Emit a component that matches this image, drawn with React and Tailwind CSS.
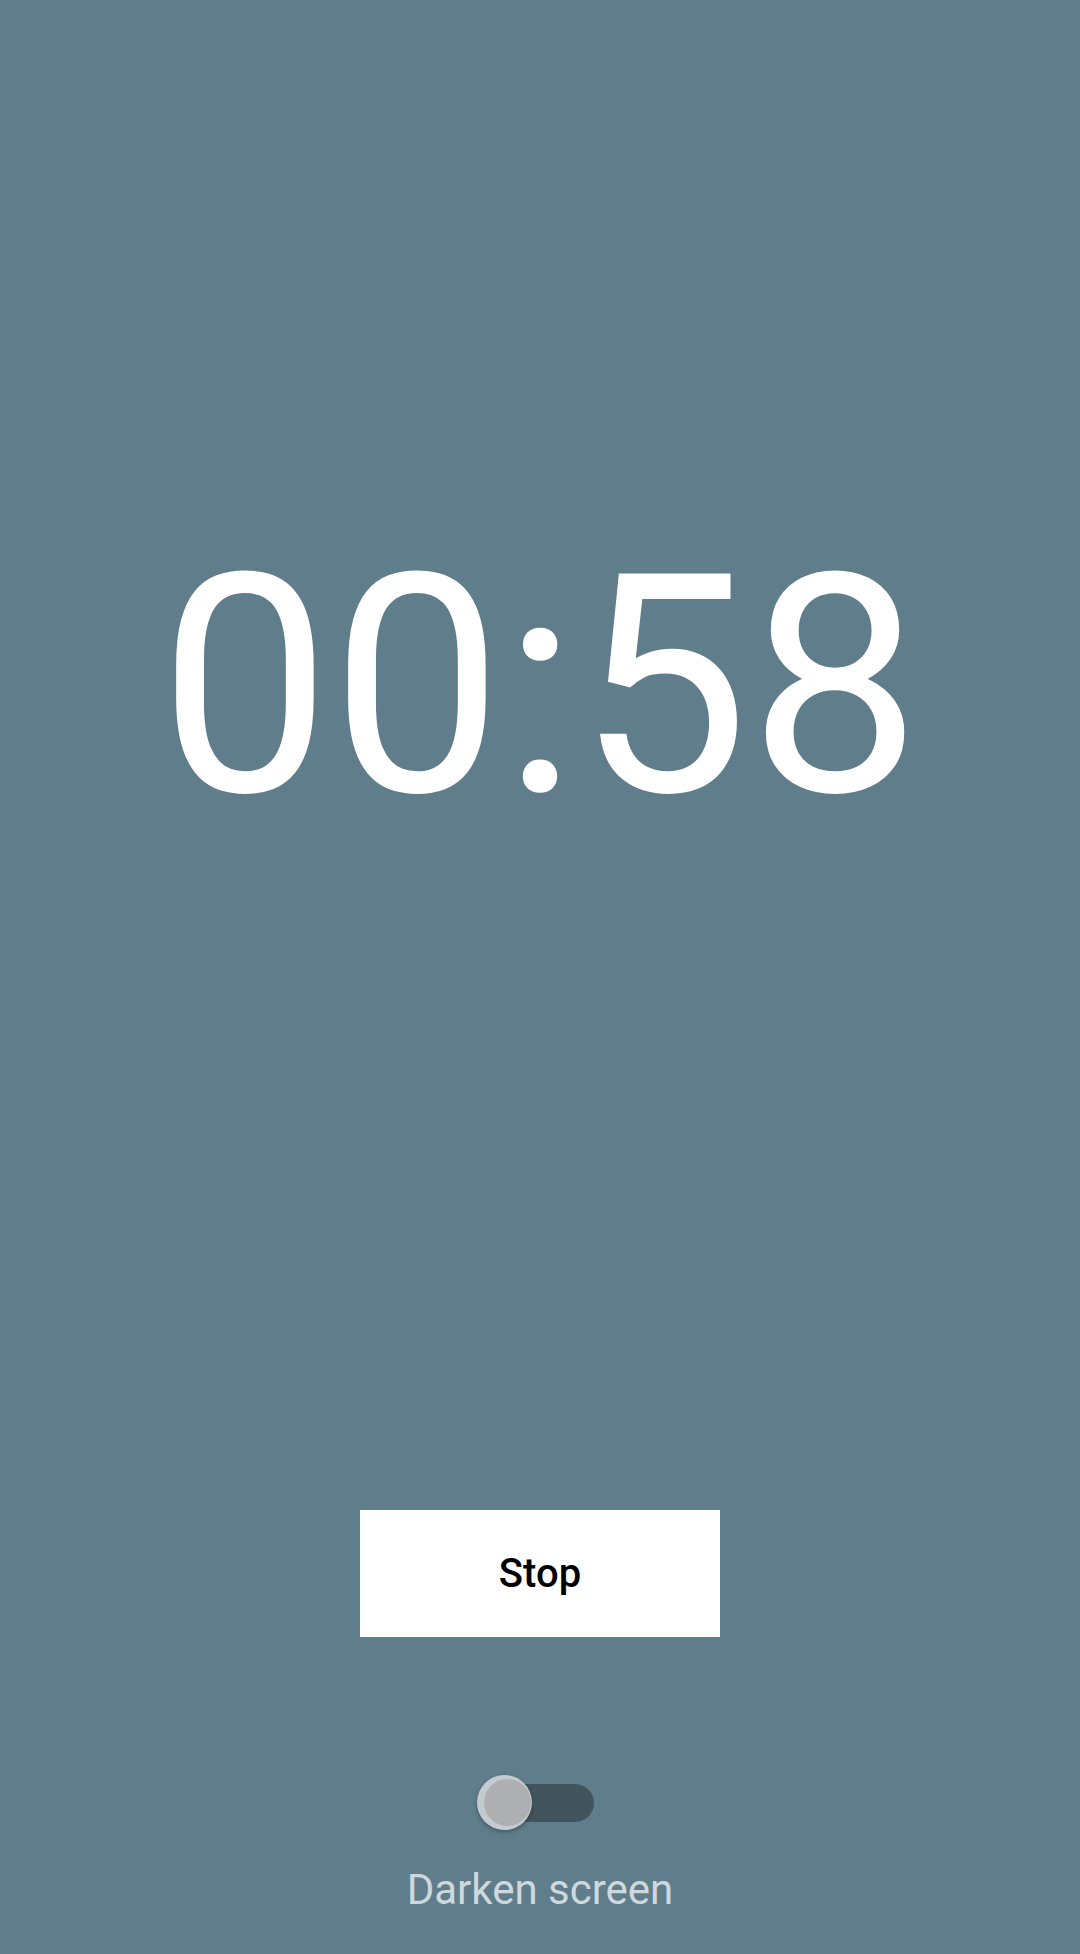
import React, { useState } from "react";

const App = () => {
  const [dark, setDark] = useState(false);

  return (
    <div
      className="w-full h-[1954px] bg-[#607d8b] flex flex-col items-center"
      style={{ fontFamily: "Roboto, 'Liberation Sans', sans-serif" }}
    >
      {/* timer */}
      <div className="mt-[517px] text-white text-[306px] leading-[340px]">
        00:58
      </div>

      {/* stop button */}
      <button className="mt-[653px] w-[360px] h-[127px] bg-white text-black text-[40px] font-medium flex items-center justify-center">
        Stop
      </button>

      {/* darken switch */}
      <button
        onClick={() => setDark(!dark)}
        className="mt-[138px] mr-[9px] relative w-[117px] h-[55px] flex items-center"
      >
        <div className="absolute left-[23px] right-0 h-[38px] rounded-full bg-[#42555e]" />
        <div className="absolute left-0 top-0 w-[55px] h-[55px] rounded-full bg-[#c3cbcf] shadow-[0_2px_4px_rgba(0,0,0,0.3)] flex items-center justify-end pr-[1px]">
          <div className="w-[47px] h-[47px] rounded-full bg-[#adafb0]" />
        </div>
      </button>

      <div className="mt-[36px] text-[42px] leading-[48px] text-[#cfd8dc]">
        Darken screen
      </div>
    </div>
  );
};

export default App;
